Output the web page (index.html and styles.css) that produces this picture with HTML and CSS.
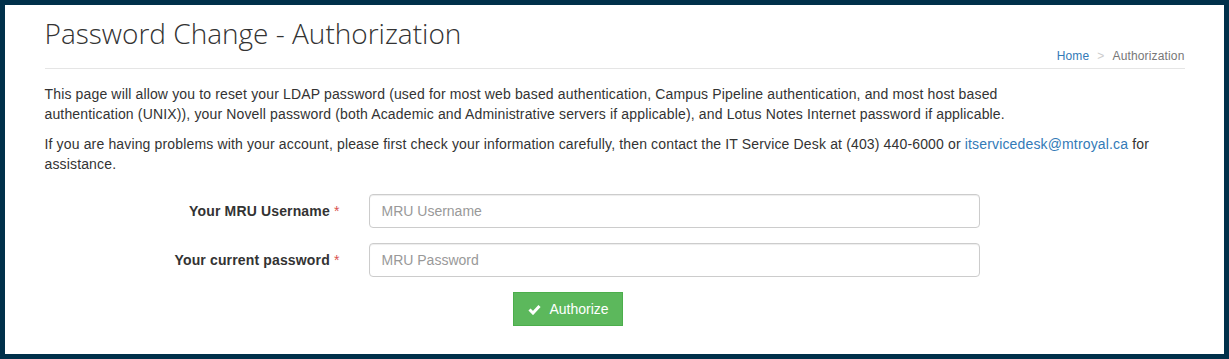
FILE: index.html
```html
<!DOCTYPE html>
<html lang="en">
<head>
    <meta charset="UTF-8">
    <title>Password Change - Authorization</title>
    <link rel="stylesheet" href="styles.css">
</head>
<body>
    <div class="page">
        <div class="container">
            <div class="page-header">
                <h1>Password Change - Authorization</h1>
                <ol class="breadcrumb">
                    <li><a href="#">Home</a></li>
                    <li class="sep">&gt;</li>
                    <li class="active">Authorization</li>
                </ol>
            </div>

            <p>This page will allow you to reset your LDAP password (used for most web based authentication, Campus Pipeline authentication, and most host based<br>authentication (UNIX)), your Novell password (both Academic and Administrative servers if applicable), and Lotus Notes Internet password if applicable.</p>
            <p>If you are having problems with your account, please first check your information carefully, then contact the IT Service Desk at (403) 440-6000 or <a href="#">itservicedesk@mtroyal.ca</a> for assistance.</p>

            <form class="auth-form">
                <div class="form-row">
                    <label for="username">Your MRU Username <span class="req">*</span></label>
                    <input type="text" id="username" placeholder="MRU Username">
                </div>
                <div class="form-row">
                    <label for="password">Your current password <span class="req">*</span></label>
                    <input type="password" id="password" placeholder="MRU Password">
                </div>
                <div class="form-actions">
                    <button type="submit" class="btn-success">
                        <svg width="13" height="11" viewBox="0 0 13 11"><polyline points="1.5,5.5 5,9 11.5,2" fill="none" stroke="#fff" stroke-width="3"/></svg>
                        Authorize
                    </button>
                </div>
            </form>
        </div>
    </div>
</body>
</html>
```

FILE: styles.css
```css
* {
    box-sizing: border-box;
}

body {
    margin: 0;
    background-color: #00304a;
    font-family: 'Liberation Sans', Arial, sans-serif;
    font-size: 14px;
    line-height: 20px;
    letter-spacing: 0.15px;
    color: #333;
}

a {
    color: #337ab7;
    text-decoration: none;
}

.page {
    margin: 5px;
    background: #fff;
    min-height: calc(100vh - 10px);
    padding-top: 12px;
}

.container {
    max-width: 1140px;
    margin: 0 auto;
}

/* Header */
.page-header {
    display: flex;
    justify-content: space-between;
    align-items: flex-end;
    border-bottom: 1px solid #e5e5e5;
    margin-bottom: 15px;
}

.page-header h1 {
    margin: 0 0 18px;
    font-family: 'Open Sans', sans-serif;
    font-weight: 300;
    font-size: 28px;
    line-height: 33px;
    letter-spacing: 0;
    color: #333;
}

.breadcrumb {
    list-style: none;
    margin: 0 0 3px;
    padding: 0;
    display: flex;
    gap: 8px;
    font-size: 12px;
    line-height: 17px;
}

.breadcrumb .sep {
    color: #ccc;
}

.breadcrumb .active {
    color: #777;
}

p {
    margin: 0 0 10px;
}

/* Form */
.auth-form {
    margin-top: 20px;
}

.form-row {
    display: flex;
    align-items: center;
    gap: 29px;
    margin-bottom: 15px;
}

.form-row label {
    width: 295px;
    text-align: right;
    font-weight: bold;
}

.req {
    color: #d9534f;
    font-weight: normal;
}

.form-row input {
    width: 611px;
    height: 34px;
    padding: 6px 12px;
    font-family: inherit;
    font-size: 14px;
    color: #555;
    border: 1px solid #ccc;
    border-radius: 4px;
    box-shadow: inset 0 1px 1px rgba(0, 0, 0, 0.075);
}

.form-row input::placeholder {
    color: #999;
}

.form-actions {
    padding-left: 468px;
}

.btn-success {
    display: flex;
    align-items: center;
    gap: 9px;
    height: 34px;
    padding: 6px 13px 6px 14px;
    background-color: #5cb85c;
    border: 1px solid #4cae4c;
    color: #fff;
    font-family: inherit;
    font-size: 14px;
    letter-spacing: 0;
    border-radius: 0;
    cursor: pointer;
}
```
